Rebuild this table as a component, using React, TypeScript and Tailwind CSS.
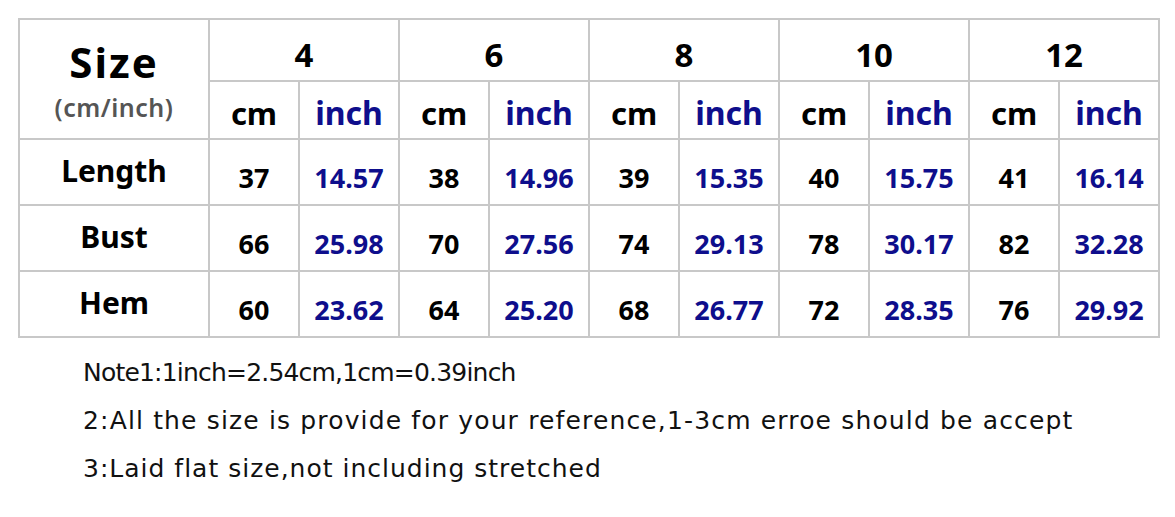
import React from "react";

const sizes = ["4", "6", "8", "10", "12"];
const rows = [
  { label: "Length", vals: [["37", "14.57"], ["38", "14.96"], ["39", "15.35"], ["40", "15.75"], ["41", "16.14"]] },
  { label: "Bust", vals: [["66", "25.98"], ["70", "27.56"], ["74", "29.13"], ["78", "30.17"], ["82", "32.28"]] },
  { label: "Hem", vals: [["60", "23.62"], ["64", "25.20"], ["68", "26.77"], ["72", "28.35"], ["76", "29.92"]] },
];

const cell = "border-2 border-[#c8c8c8] p-0 text-center align-middle";

export default function App() {
  return (
    <div className="w-[1175px] h-[517px] bg-white font-['Noto_Sans',sans-serif] text-black">
      <div className="pt-[18px] pl-[18px]">
        <table className="border-collapse table-fixed w-[1140px]">
          <colgroup>
            <col className="w-[190px]" />
            {sizes.map((s) => (
              <React.Fragment key={s}>
                <col className="w-[90px]" />
                <col className="w-[100px]" />
              </React.Fragment>
            ))}
          </colgroup>
          <tbody>
            <tr className="h-[62px]">
              <td rowSpan={2} className={cell}>
                <div className="flex flex-col items-center pt-[2px]">
                  <span className="text-[42px] font-bold leading-none tracking-[2px]">Size</span>
                  <span className="text-[25px] font-semibold text-[#555] leading-none mt-[12px] tracking-[0.5px]">(cm/inch)</span>
                </div>
              </td>
              {sizes.map((s) => (
                <td key={s} colSpan={2} className={`${cell} text-[33px] font-bold leading-none pt-[8px]`}>
                  {s}
                </td>
              ))}
            </tr>
            <tr className="h-[58px]">
              {sizes.map((s) => (
                <React.Fragment key={s}>
                  <td className={`${cell} text-[31px] font-bold leading-none pt-[6px]`}>cm</td>
                  <td className={`${cell} text-[32px] font-bold leading-none pt-[6px] text-[#0e0e8c]`}>inch</td>
                </React.Fragment>
              ))}
            </tr>
            {rows.map((r) => (
              <tr key={r.label} className="h-[66px]">
                <td className={`${cell} text-[30px] font-bold leading-none pb-[2px]`}>{r.label}</td>
                {r.vals.map(([c, i], k) => (
                  <React.Fragment key={k}>
                    <td className={`${cell} text-[27px] font-bold leading-none pt-[10px]`}>{c}</td>
                    <td className={`${cell} text-[27px] font-bold leading-none pt-[10px] text-[#0e0e8c]`}>{i}</td>
                  </React.Fragment>
                ))}
              </tr>
            ))}
          </tbody>
        </table>
      </div>
      <div className="pl-[83px] pt-[11px] font-['DejaVu_Sans',sans-serif] text-[25px] leading-[48px] text-[#111]">
        <div className="tracking-[-0.8px]">Note1:1inch=2.54cm,1cm=0.39inch</div>
        <div className="tracking-[1.15px]">2:All the size is provide for your reference,1-3cm erroe should be accept</div>
        <div className="tracking-[1px]">3:Laid flat size,not including stretched</div>
      </div>
    </div>
  );
}
